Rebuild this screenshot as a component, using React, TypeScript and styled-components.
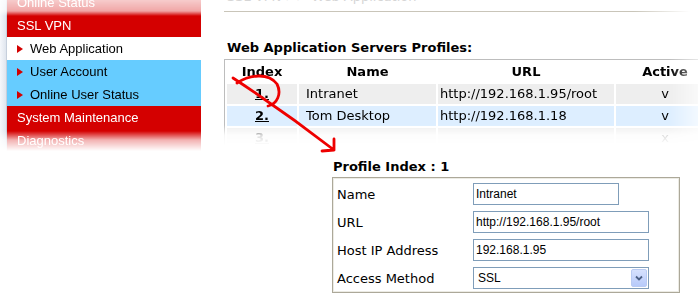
import React from 'react';
import styled, { createGlobalStyle } from 'styled-components';

const GlobalStyle = createGlobalStyle`
  html, body {
    margin: 0;
    padding: 0;
    background: #fff;
  }
  body {
    font-family: "DejaVu Sans", Verdana, sans-serif;
  }
`;

const Page = styled.div`
  position: relative;
  display: flex;
  align-items: flex-start;
  width: 698px;
  height: 297px;
  overflow: hidden;
  background: #fff;
`;

// Left menu, torn off at top and bottom
const Sidebar = styled.nav`
  flex: 0 0 201px;
  display: flex;
  margin-top: -9px;
  -webkit-mask-image: linear-gradient(
    to bottom,
    rgba(0, 0, 0, 0.08) 0,
    rgba(0, 0, 0, 0.35) 20px,
    #000 25px,
    #000 140px,
    rgba(0, 0, 0, 0.3) 149px,
    transparent 160px
  );
  mask-image: linear-gradient(
    to bottom,
    rgba(0, 0, 0, 0.08) 0,
    rgba(0, 0, 0, 0.35) 20px,
    #000 25px,
    #000 140px,
    rgba(0, 0, 0, 0.3) 149px,
    transparent 160px
  );
`;

const Frame = styled.div`
  width: 6px;
  background: linear-gradient(to right, #f5f7fb, #dfe5ee);
  border-right: 1px solid #c6cfdc;
`;

const Menu = styled.ul`
  flex: 1;
  list-style: none;
  margin: 0;
  padding: 0;
  font-family: "Liberation Sans", Arial, sans-serif;
  font-size: 13px;
`;

const Category = styled.li`
  height: 23px;
  line-height: 23px;
  padding-left: 10px;
  background: #d40000;
  color: #fff;
  white-space: nowrap;
`;

const SubItem = styled.li<{ $active?: boolean }>`
  display: flex;
  align-items: center;
  gap: 7px;
  height: 23px;
  padding-left: 10px;
  background: ${(p) => (p.$active ? '#fff' : '#66ccff')};
  color: #000;
  white-space: nowrap;
`;

const Bullet = styled.span`
  width: 0;
  height: 0;
  border-top: 4px solid transparent;
  border-bottom: 4px solid transparent;
  border-left: 6px solid #d40000;
`;

const Main = styled.main`
  flex: 1;
  min-width: 0;
  margin-left: 23px;
  font-size: 13px;
  color: #000;
`;

const TitleBar = styled.div`
  height: 11px;
  overflow: hidden;
`;

const TitleText = styled.div`
  margin: -11px 0 0 3px;
  line-height: 16px;
  color: #d6d6d6;
  white-space: nowrap;
`;

const Rule = styled.div`
  width: 466px;
  height: 1px;
  background: linear-gradient(to right, #c9c5b9 88%, rgba(201, 197, 185, 0));
`;

const Heading = styled.div`
  margin: 28px 0 0 3px;
  line-height: 16px;
  font-weight: bold;
  white-space: nowrap;
`;

const ProfileTable = styled.table`
  margin-top: 3px;
  width: 493px;
  table-layout: fixed;
  border-collapse: separate;
  border-spacing: 2px;
  border: 1px solid #bdbdbd;
  font-size: 13px;
  line-height: 16px;
  -webkit-mask-image: linear-gradient(to bottom, #000 66px, rgba(0, 0, 0, 0.15) 76px, transparent 86px),
    linear-gradient(to right, #000 445px, transparent 490px);
  -webkit-mask-composite: source-in;
  mask-image: linear-gradient(to bottom, #000 66px, rgba(0, 0, 0, 0.15) 76px, transparent 86px),
    linear-gradient(to right, #000 445px, transparent 490px);
  mask-composite: intersect;
`;

const HeadCell = styled.th`
  height: 20px;
  padding: 0;
  font-weight: bold;
  text-align: center;
  background: #fff;
`;

const Row = styled.tr<{ $tone: 'gray' | 'blue' }>`
  background: ${(p) => (p.$tone === 'blue' ? '#ddeeff' : '#eeeeee')};
`;

const Cell = styled.td<{ $align?: 'left' | 'center'; $pad?: number }>`
  height: 20px;
  padding: 0 0 0 ${(p) => p.$pad ?? 0}px;
  text-align: ${(p) => p.$align ?? 'left'};
  white-space: nowrap;
  overflow: hidden;
`;

const IndexLink = styled.span`
  font-weight: bold;
  text-decoration: underline;
`;

const Profile = styled.section`
  margin: 8px 0 0 108px;
  width: 348px;
`;

const ProfileTitle = styled.div`
  padding-left: 1px;
  line-height: 16px;
  font-weight: bold;
`;

const ProfileBox = styled.div`
  box-sizing: border-box;
  height: 116px;
  margin-top: 2px;
  padding: 5px 4px 3px;
  border: 1px solid #aca899;
  box-shadow: inset 0 0 0 1px #ecebe4;
  display: grid;
  grid-template-columns: 136px auto;
  row-gap: 6px;
  align-items: center;
`;

const Label = styled.div`
  font-size: 13px;
  white-space: nowrap;
`;

const TextInput = styled.input<{ $w: number }>`
  box-sizing: border-box;
  width: ${(p) => p.$w}px;
  height: 22px;
  margin: 0;
  padding: 0 2px;
  border: 1px solid #7f9db9;
  background: #fff;
  font-family: "Liberation Sans", Arial, sans-serif;
  font-size: 12px;
  color: #000;
  outline: none;
`;

const Select = styled.div`
  box-sizing: border-box;
  display: flex;
  align-items: center;
  justify-content: space-between;
  width: 176px;
  height: 22px;
  padding: 0 1px 0 4px;
  border: 1px solid #7f9db9;
  font-family: "Liberation Sans", Arial, sans-serif;
  font-size: 12px;
`;

const SelectButton = styled.span`
  box-sizing: border-box;
  display: flex;
  align-items: center;
  justify-content: center;
  width: 16px;
  height: 18px;
  border: 1px solid #b9cbf3;
  border-radius: 2px;
  background: linear-gradient(to bottom, #d6e1fd, #b7cafa);
`;

const Annotation = styled.svg`
  position: absolute;
  top: 0;
  left: 0;
  pointer-events: none;
`;

const menu = [
  { kind: 'cat', label: 'Online Status' },
  { kind: 'cat', label: 'SSL VPN' },
  { kind: 'sub', label: 'Web Application', active: true },
  { kind: 'sub', label: 'User Account' },
  { kind: 'sub', label: 'Online User Status' },
  { kind: 'cat', label: 'System Maintenance' },
  { kind: 'cat', label: 'Diagnostics' },
];

const servers = [
  { index: '1.', name: 'Intranet', url: 'http://192.168.1.95/root', active: 'v', tone: 'gray' as const },
  { index: '2.', name: 'Tom Desktop', url: 'http://192.168.1.18', active: 'v', tone: 'blue' as const },
  { index: '3.', name: '', url: '', active: 'x', tone: 'gray' as const },
];

const App: React.FC = () => {
  return (
    <>
      <GlobalStyle />
      <Page>
        <Sidebar>
          <Frame />
          <Menu>
            {menu.map((m) =>
              m.kind === 'cat' ? (
                <Category key={m.label}>{m.label}</Category>
              ) : (
                <SubItem key={m.label} $active={m.active}>
                  <Bullet />
                  {m.label}
                </SubItem>
              )
            )}
          </Menu>
        </Sidebar>

        <Main>
          <TitleBar>
            <TitleText>SSL VPN &gt;&gt; Web Application</TitleText>
          </TitleBar>
          <Rule />

          <Heading>Web Application Servers Profiles:</Heading>
          <ProfileTable>
            <colgroup>
              <col style={{ width: 70 }} />
              <col style={{ width: 137 }} />
              <col style={{ width: 176 }} />
              <col style={{ width: 98 }} />
            </colgroup>
            <thead>
              <tr>
                <HeadCell>Index</HeadCell>
                <HeadCell>Name</HeadCell>
                <HeadCell>URL</HeadCell>
                <HeadCell>Active</HeadCell>
              </tr>
            </thead>
            <tbody>
              {servers.map((s) => (
                <Row key={s.index} $tone={s.tone}>
                  <Cell $align="center">
                    <IndexLink>{s.index}</IndexLink>
                  </Cell>
                  <Cell $pad={7}>{s.name}</Cell>
                  <Cell $pad={2}>{s.url}</Cell>
                  <Cell $align="center">{s.active}</Cell>
                </Row>
              ))}
            </tbody>
          </ProfileTable>

          <Profile>
            <ProfileTitle>Profile Index : 1</ProfileTitle>
            <ProfileBox>
              <Label>Name</Label>
              <TextInput $w={146} readOnly value="Intranet" />
              <Label>URL</Label>
              <TextInput $w={176} readOnly value="http://192.168.1.95/root" />
              <Label>Host IP Address</Label>
              <TextInput $w={176} readOnly value="192.168.1.95" />
              <Label>Access Method</Label>
              <Select>
                SSL
                <SelectButton>
                  <svg width="8" height="6" viewBox="0 0 8 6">
                    <path d="M1 1.5 L4 4.5 L7 1.5" fill="none" stroke="#4d6185" strokeWidth="1.8" />
                  </svg>
                </SelectButton>
              </Select>
            </ProfileBox>
          </Profile>
        </Main>

        <Annotation width="698" height="297" viewBox="0 0 698 297">
          <path
            d="M237 83 C249 75 268 72 277 84 C282 94 277 104 268 106 M233 78 Q285 112 334 150 M322 151 L334 150 L334 139"
            fill="none"
            stroke="#ee0000"
            strokeWidth="2.8"
            strokeLinecap="round"
            strokeLinejoin="round"
          />
        </Annotation>
      </Page>
    </>
  );
};

export default App;
